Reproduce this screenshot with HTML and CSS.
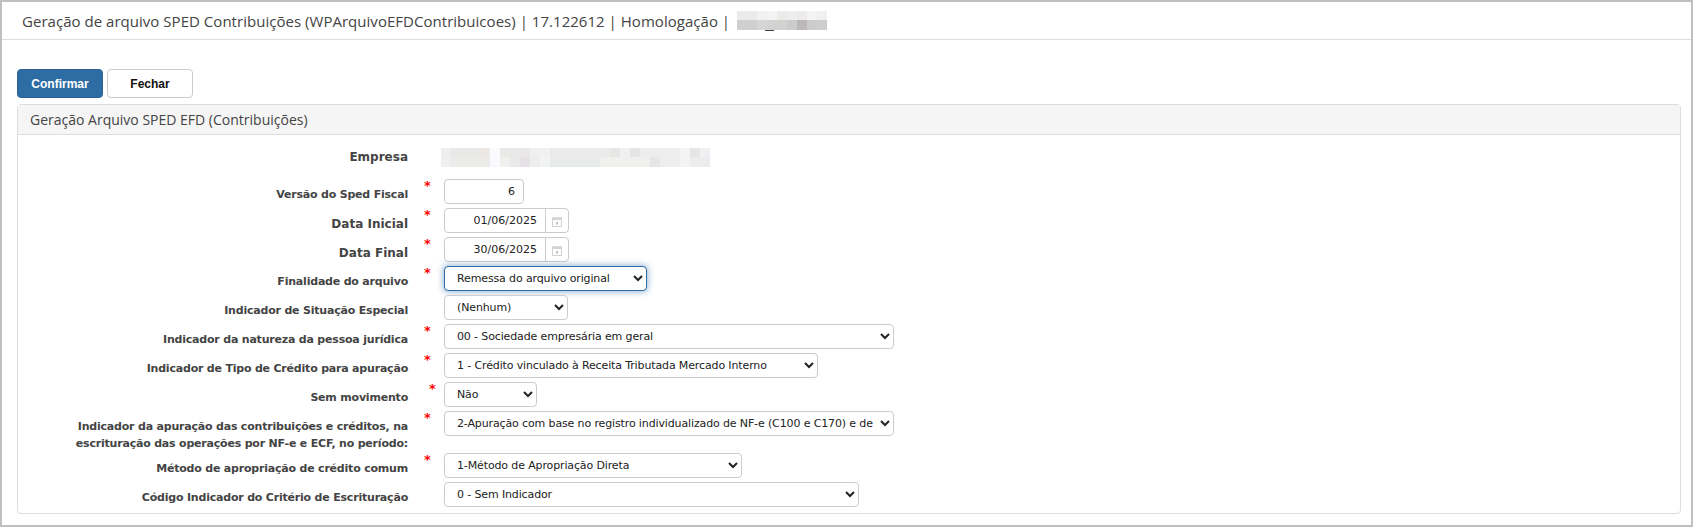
FILE: index.html
```html
<!DOCTYPE html>
<html lang="pt-BR">
  <head>
    <meta charset="utf-8">
    <title>Geração de arquivo SPED Contribuições</title>
    <link rel="stylesheet" href="styles.css">
  </head>
  <body>
    <header class="page-title">
      <span>Geração de arquivo SPED Contribuições (WPArquivoEFDContribuicoes) | 17.122612 | Homologação |</span>
      <span class="masked masked-title"></span>
    </header>
    <main class="content">
      <section class="actions">
        <button class="btn btn-primary">Confirmar</button>
        <button class="btn">Fechar</button>
      </section>
      <section class="panel">
        <h2 class="panel-heading">Geração Arquivo SPED EFD (Contribuições)</h2>
        <form class="panel-body">
          <div class="row row-company">
            <label class="big">Empresa</label>
            <span class="req"></span>
            <span class="masked masked-company"></span>
          </div>
          <div class="row">
            <label>Versão do Sped Fiscal</label>
            <span class="req">*</span>
            <input class="field w-version" type="text" value="6">
          </div>
          <div class="row">
            <label class="big">Data Inicial</label>
            <span class="req">*</span>
            <div class="date-group">
              <input class="field" type="text" value="01/06/2025">
              <span class="date-btn">
                <svg width="12" height="12" viewBox="0 0 12 12">
                  <rect x="1.5" y="2" width="9" height="8.5" fill="#fff" stroke="#d2d2d2"/>
                  <rect x="1" y="1.5" width="10" height="2.5" fill="#d2d2d2"/>
                  <rect x="5" y="6" width="2" height="2.5" fill="#c0c0c0"/>
                </svg>
              </span>
            </div>
          </div>
          <div class="row">
            <label class="big">Data Final</label>
            <span class="req">*</span>
            <div class="date-group">
              <input class="field" type="text" value="30/06/2025">
              <span class="date-btn">
                <svg width="12" height="12" viewBox="0 0 12 12">
                  <rect x="1.5" y="2" width="9" height="8.5" fill="#fff" stroke="#d2d2d2"/>
                  <rect x="1" y="1.5" width="10" height="2.5" fill="#d2d2d2"/>
                  <rect x="5" y="6" width="2" height="2.5" fill="#c0c0c0"/>
                </svg>
              </span>
            </div>
          </div>
          <div class="row">
            <label>Finalidade do arquivo</label>
            <span class="req">*</span>
            <select class="field w-finalidade focused"><option>Remessa do arquivo original</option></select>
          </div>
          <div class="row">
            <label>Indicador de Situação Especial</label>
            <span class="req"></span>
            <select class="field w-situacao"><option>(Nenhum)</option></select>
          </div>
          <div class="row">
            <label>Indicador da natureza da pessoa jurídica</label>
            <span class="req">*</span>
            <select class="field w-natureza"><option>00 - Sociedade empresária em geral</option></select>
          </div>
          <div class="row">
            <label>Indicador de Tipo de Crédito para apuração</label>
            <span class="req">*</span>
            <select class="field w-credito"><option>1 - Crédito vinculado à Receita Tributada Mercado Interno</option></select>
          </div>
          <div class="row">
            <label>Sem movimento</label>
            <span class="req req-shift">*</span>
            <select class="field w-movimento"><option>Não</option></select>
          </div>
          <div class="row row-tall">
            <label>Indicador da apuração das contribuições e créditos, na<br>escrituração das operações por NF-e e ECF, no período:</label>
            <span class="req">*</span>
            <select class="field w-natureza"><option>2-Apuração com base no registro individualizado de NF-e (C100 e C170) e de ECF (C490)</option></select>
          </div>
          <div class="row">
            <label>Método de apropriação de crédito comum</label>
            <span class="req">*</span>
            <select class="field w-metodo"><option>1-Método de Apropriação Direta</option></select>
          </div>
          <div class="row">
            <label>Código Indicador do Critério de Escrituração</label>
            <span class="req"></span>
            <select class="field w-codigo"><option>0 - Sem Indicador</option></select>
          </div>
        </form>
      </section>
    </main>
  </body>
</html>
```

FILE: styles.css
```css
html, body {
  height: 100%;
}
body {
  margin: 0;
  box-sizing: border-box;
  height: 527px;
  overflow: hidden;
  border: 2px solid #c0c0c0;
  background: #fff;
  font-family: "DejaVu Sans", sans-serif;
  color: #333;
}
.page-title {
  display: flex;
  align-items: center;
  gap: 7px;
  box-sizing: border-box;
  height: 38px;
  padding: 0 0 0 20px;
  border-bottom: 1px solid #ddd;
  font-family: "Open Sans", sans-serif;
  font-size: 15px;
  letter-spacing: 0.03px;
  color: #444;
}
.masked {
  display: block;
  background-repeat: no-repeat;
}
.masked-title {
  width: 90px;
  height: 20px;
  background-image:
    linear-gradient(90deg, transparent 28px, #444 28px 37px, transparent 37px),
    linear-gradient(90deg, #ebebeb 0 20px, #f1f1f3 20px 30px, #f3f3f1 30px 40px, #ebebe9 40px 50px, #eeeef0 50px 60px, #ebebeb 60px 70px, #f3f3f5 70px 80px, #f0f0f0 80px),
    linear-gradient(90deg, #cfcfcd 0 20px, #d6d6d6 20px 30px, #d2d2d2 30px 40px, #d3d2d0 40px 50px, #ccccce 50px 60px, #bdb8b8 60px 70px, #cbcccc 70px 80px, #cdcdcd 80px);
  background-size: 100% 1px, 100% 9px, 100% 10px;
  background-position: 0 19px, 0 0, 0 9px;
}
.masked-company {
  width: 269px;
  height: 19px;
  margin-left: -3px;
  background-image:
    linear-gradient(90deg, #efefef 0 9px, #e9eae8 9px 39px, #ece9e5 39px 49px, #f9fbff 49px 59px, #eae9e7 59px 89px, #efefef 89px 99px, #f0f1f0 99px 109px, #ebeaea 109px 169px, #e8e6e4 169px 179px, #f0f0f0 179px 189px, #e4e4e4 189px 199px, #ededed 199px 239px, #f4f4f4 239px 249px, #e6e6e6 249px 259px, #eef0f4 259px),
    linear-gradient(90deg, #f0f0f0 0 9px, #ebebea 9px 49px, #f9fafe 49px 59px, #f0f0ee 59px 69px, #eaeaea 69px 79px, #e4e2e4 79px 89px, #ededed 89px 99px, #f2f3f4 99px 109px, #e9eaea 109px 159px, #f0f0ee 159px 209px, #e6e6e6 209px 219px, #eeeeee 219px 239px, #f3f3f3 239px 249px, #ececec 249px);
  background-size: 100% 9px, 100% 10px;
  background-position: 0 0, 0 9px;
}
.content {
  padding: 29px 10px 0 15px;
}
.actions {
  display: flex;
  gap: 4px;
  margin-bottom: 6px;
}
.btn {
  box-sizing: border-box;
  width: 86px;
  height: 29px;
  padding: 0;
  border: 1px solid #ccc;
  border-radius: 4px;
  background: #fff;
  font-family: "Liberation Sans", sans-serif;
  font-size: 12px;
  font-weight: bold;
  color: #111;
}
.btn-primary {
  border-color: #2a6496;
  background: #2e6da4;
  color: #fff;
}
.panel {
  box-sizing: border-box;
  height: 410px;
  border: 1px solid #ddd;
  border-radius: 4px;
}
.panel-heading {
  box-sizing: border-box;
  height: 30px;
  margin: 0;
  padding: 0 12px;
  border-bottom: 1px solid #ddd;
  background: #f5f5f5;
  font-family: "Open Sans", sans-serif;
  font-size: 14px;
  font-weight: normal;
  line-height: 29px;
  color: #444;
}
.panel-body {
  padding-top: 13px;
}
.row {
  display: grid;
  grid-template-columns: 390px 36px 1fr;
  align-items: start;
  height: 25px;
  margin-bottom: 4px;
}
.row-company {
  height: 19px;
  margin-bottom: 12px;
}
.row-tall {
  height: 38px;
}
.row label {
  padding-top: 7px;
  text-align: right;
  font-size: 11px;
  font-weight: bold;
  letter-spacing: -0.2px;
  line-height: 17px;
  color: #444;
}
.row-company label {
  padding-top: 0;
}
.row label.big {
  font-size: 12px;
  letter-spacing: 0;
  line-height: 18px;
}
.req {
  padding-left: 16px;
  color: #f00;
  font-size: 13px;
  font-weight: bold;
  line-height: 14px;
}
.req-shift {
  padding-left: 21px;
}
.field {
  box-sizing: border-box;
  height: 25px;
  border: 1px solid #ccc;
  border-radius: 4px;
  background: #fff;
  font-family: "DejaVu Sans", sans-serif;
  font-size: 11px;
  color: #222;
}
input.field {
  padding: 0 8px;
  text-align: right;
}
select.field {
  padding: 0 0 0 8px;
  letter-spacing: -0.13px;
}
.focused {
  border-color: #2e6da4;
  box-shadow: 0 0 6px 1px rgba(102, 150, 200, 0.7);
}
.w-version { width: 80px; }
.w-finalidade { width: 203px; }
.w-situacao { width: 124px; }
.w-natureza { width: 450px; }
.w-credito { width: 374px; }
.w-movimento { width: 93px; }
.w-metodo { width: 298px; }
.w-codigo { width: 415px; }
.date-group {
  display: flex;
  width: 125px;
}
.date-group .field {
  width: 102px;
  border-radius: 4px 0 0 4px;
}
.date-btn {
  display: flex;
  align-items: center;
  justify-content: center;
  box-sizing: border-box;
  width: 24px;
  height: 25px;
  margin-left: -1px;
  padding-top: 2px;
  border: 1px solid #ccc;
  border-radius: 0 4px 4px 0;
}
```
